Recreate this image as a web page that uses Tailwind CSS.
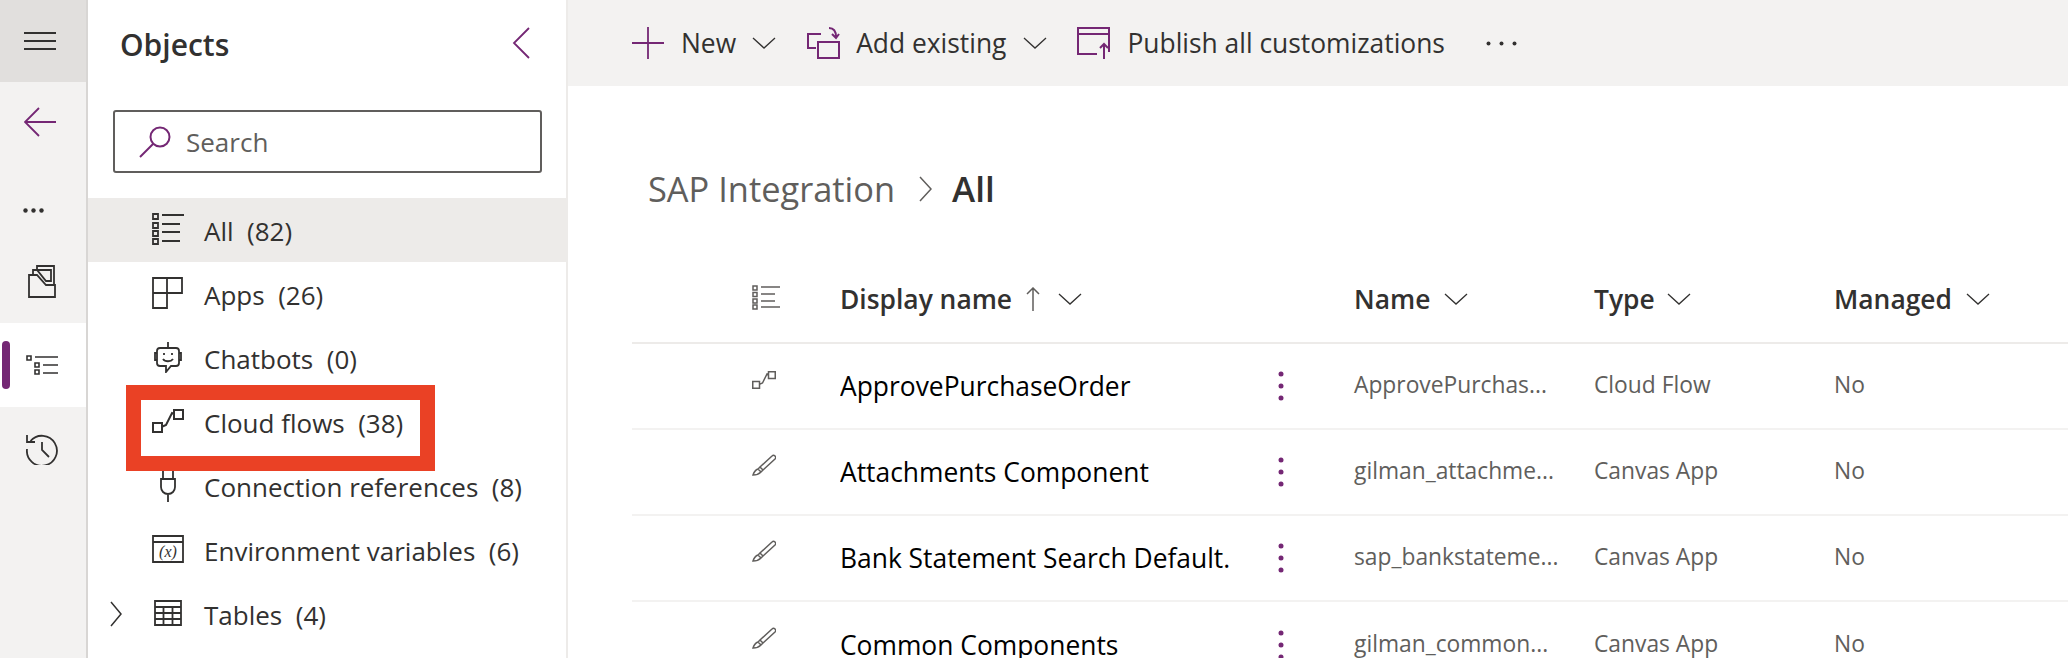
<!DOCTYPE html>
<html lang="en">
<head>
<meta charset="utf-8">
<title>SAP Integration - All</title>
<script src="https://cdn.jsdelivr.net/npm/@tailwindcss/browser@4"></script>
</head>
<body class="bg-white">
<svg class="hidden">
    <symbol id="chevron-down" viewBox="0 0 24 12"><path d="M1 1l11 10L23 1" fill="none" stroke="currentColor" stroke-width="1.300"/></symbol>
    <symbol id="flow" viewBox="0 0 32 24"><path d="M1 14h9v9H1zM22 1h9v9h-9zM10.500 17.500L14 16l6-12 2 1" fill="none" stroke="currentColor" stroke-width="2"/></symbol>
    <symbol id="brush" viewBox="0 0 24 22"><path d="M20 2a2 2 0 0 1 3 3L11 16l-3-3zM8 13l-2 2 3 3 2-2M6 15c-3 1-4 3-5 6 3 0 6-1 8-3" fill="none" stroke="currentColor" stroke-width="1.500"/></symbol>
</svg>

<div class="relative flex w-[2068px] h-[658px] overflow-hidden font-['Open_Sans',sans-serif] text-[#323130]">

    <!-- left rail -->
    <nav class="w-[88px] shrink-0 flex flex-col bg-[#f3f2f1] border-r-2 border-[#d8d6d4]">
        <div class="h-[82px] flex items-center pl-[24px] bg-[#e1dfdd]">
            <svg class="w-8 h-[18px]" viewBox="0 0 32 18"><path d="M0 1h32M0 9h32M0 17h32" stroke="#323130" stroke-width="1.800"/></svg>
        </div>
        <div class="h-[80px] flex items-center pl-[24px]">
            <svg class="w-8 h-[30px]" viewBox="0 0 32 30"><path d="M15 1L1 15l14 14M1 15h31" fill="none" stroke="#742774" stroke-width="1.800"/></svg>
        </div>
        <div class="h-[96px] flex items-center pl-[23px]">
            <svg class="w-[21px] h-[5px]" viewBox="0 0 21 5"><circle cx="2.500" cy="2.500" r="2.200" fill="#323130"/><circle cx="10.500" cy="2.500" r="2.200" fill="#323130"/><circle cx="18.500" cy="2.500" r="2.200" fill="#323130"/></svg>
        </div>
        <div class="h-[65px] pb-[18px] flex items-center pl-[28px]">
            <svg class="w-[28px] h-[33px]" viewBox="0 0 28 33"><path d="M1 32V10h8l9 10h9v12zM5 10V5h4l9 11h5V5H5M9 5V1h17v18" fill="none" stroke="#323130" stroke-width="1.800"/></svg>
        </div>
        <div class="relative h-[84px] bg-white flex items-center pl-[26px]">
            <div class="absolute left-[2px] top-[18px] w-2 h-12 rounded bg-[#742774]"></div>
            <svg class="w-8 h-5" viewBox="0 0 32 20"><path d="M1 1h4v4H1zM9 8h4v4H9zM9 15h4v4H9zM9 2h23M17 10h15M17 18h15" fill="none" stroke="#323130" stroke-width="1.600"/></svg>
        </div>
        <div class="h-[84px] flex items-center pl-[26px]">
            <svg class="w-8 h-8" viewBox="0 0 32 32"><path d="M4.500 8A15 15 0 1 1 1 16M1 2v7h8M16 9v8l7 7" fill="none" stroke="#323130" stroke-width="1.800"/></svg>
        </div>
    </nav>

    <!-- objects panel -->
    <aside class="w-[480px] shrink-0 border-r-2 border-[#edebe9] bg-white">
        <div class="h-[110px] pl-[32px] pr-[36px] pt-[25px] flex justify-between items-start">
            <h2 class="text-[30px] leading-[40px] font-semibold">Objects</h2>
            <svg class="w-[18px] h-[32px] mt-[2px]" viewBox="0 0 18 32"><path d="M17 1L2 16l15 15" fill="none" stroke="#742774" stroke-width="1.800"/></svg>
        </div>
        <div class="ml-[25px] w-[429px] h-[63px] border-2 border-[#605e5c] rounded-[3px] flex items-center pl-[24px]">
            <svg class="w-[32px] h-[32px]" viewBox="0 0 32 32"><circle cx="21" cy="11" r="9.500" fill="none" stroke="#742774" stroke-width="2"/><path d="M14 18L1 31" stroke="#742774" stroke-width="2"/></svg>
            <span class="ml-[15px] pt-[2px] text-[26px] text-[#605e5c]">Search</span>
        </div>
        <ul class="mt-[25px] text-[26px]">
            <li class="h-[64px] flex items-center pl-[22px] bg-[#edebe9]">
                <span class="w-[42px]"></span>
                <svg class="w-[32px] h-[32px] mr-[20px] -mt-[2px]" viewBox="0 0 32 32"><path d="M1 1h5v5H1zM1 10h5v5H1zM1 18h5v5H1zM1 26h5v5H1zM10 2h22M10 11h18M10 19h18M10 28h18" fill="none" stroke="#323130" stroke-width="1.800"/></svg>
                <span class="pt-[2px]">All&nbsp; (82)</span>
            </li>
            <li class="h-[64px] flex items-center pl-[22px]">
                <span class="w-[42px]"></span>
                <svg class="w-[32px] h-[32px] mr-[20px] -mt-[2px]" viewBox="0 0 32 32"><path d="M1 1h14v15H1zM15 1h15v15H15zM1 16h14v15H1z" fill="none" stroke="#323130" stroke-width="1.800"/></svg>
                <span class="pt-[2px]">Apps&nbsp; (26)</span>
            </li>
            <li class="h-[64px] flex items-center pl-[22px]">
                <span class="w-[42px]"></span>
                <svg class="w-[32px] h-[32px] mr-[20px] -mt-[2px]" viewBox="0 0 32 32"><path d="M16 1v6M8 7h16a3 3 0 0 1 3 3v12a3 3 0 0 1-3 3h-5l-5 6v-6H8a3 3 0 0 1-3-3V10a3 3 0 0 1 3-3zM5 12H3v7h2M27 12h2v7h-2M11 18c2 3 8 3 10 0M12 12v2M20 12v2" fill="none" stroke="#323130" stroke-width="1.800"/></svg>
                <span class="pt-[2px]">Chatbots&nbsp; (0)</span>
            </li>
            <li class="h-[64px] flex items-center pl-[22px]">
                <span class="w-[42px]"></span>
                <svg class="w-[32px] h-[24px] mr-[20px] -mt-[2px]"><use href="#flow"/></svg>
                <span class="pt-[2px]">Cloud flows&nbsp; (38)</span>
            </li>
            <li class="h-[64px] flex items-center pl-[22px]">
                <span class="w-[42px]"></span>
                <svg class="w-[32px] h-[32px] mr-[20px]" viewBox="0 0 32 32"><path d="M11 1v8M21 1v8M9 9h14v8c0 4-3 7-7 7s-7-3-7-7zM16 24v8" fill="none" stroke="#323130" stroke-width="1.800"/></svg>
                <span class="pt-[2px]">Connection references&nbsp; (8)</span>
            </li>
            <li class="h-[64px] flex items-center pl-[22px]">
                <span class="w-[42px]"></span>
                <svg class="w-[32px] h-[28px] mr-[20px] -mt-[2px]" viewBox="0 0 32 28"><path d="M1 1h30v26H1zM1 7h30" fill="none" stroke="#323130" stroke-width="1.800"/><text x="16" y="22" text-anchor="middle" font-family="Liberation Serif" font-style="italic" font-size="16" fill="#323130">(x)</text></svg>
                <span class="pt-[2px]">Environment variables&nbsp; (6)</span>
            </li>
            <li class="h-[64px] flex items-center pl-[22px]">
                <svg class="w-[12px] h-[26px] mr-[30px]" viewBox="0 0 12 26"><path d="M1 1l10 12L1 25" fill="none" stroke="#323130" stroke-width="1.500"/></svg>
                <svg class="w-[32px] h-[26px] mr-[20px] -mt-[2px]" viewBox="0 0 32 26"><path d="M3 1h26v24H3zM3 7h26M3 13h26M3 19h26M11.500 7v18M20.500 7v18" fill="none" stroke="#323130" stroke-width="1.800"/></svg>
                <span class="pt-[2px]">Tables&nbsp; (4)</span>
            </li>
        </ul>
    </aside>

    <!-- main -->
    <main class="flex-1 min-w-0">
        <div class="h-[86px] bg-[#f3f2f1] pl-[64px] flex items-center text-[26.400px]">
            <svg class="w-8 h-8 mr-[17px]" viewBox="0 0 32 32"><path d="M16 0v32M0 16h32" stroke="#742774" stroke-width="1.800"/></svg>
            <span class="pt-[2px]">New</span>
            <svg class="w-[24px] h-[12px] ml-[16px] mr-[31px]"><use href="#chevron-down"/></svg>
            <svg class="w-[33px] h-[32px] mr-[16px]" viewBox="0 0 33 32"><path d="M14 7H1v14h8M11 15h21v16H11zM22 1c5 0 7 3 7 9M25 7l4 4 3-4" fill="none" stroke="#742774" stroke-width="2"/></svg>
            <span class="pt-[2px]">Add existing</span>
            <svg class="w-[24px] h-[12px] ml-[17px] mr-[30px]"><use href="#chevron-down"/></svg>
            <svg class="w-[33px] h-[32px] mr-[17px]" viewBox="0 0 33 32"><path d="M20 27H1V1h31v24M1 7h31M27 32V17M23 21l4-4 4 4" fill="none" stroke="#742774" stroke-width="2"/></svg>
            <span class="pt-[2px]">Publish all customizations</span>
            <svg class="w-[31px] h-[5px] ml-[41px]" viewBox="0 0 31 5"><circle cx="2.500" cy="2.500" r="2" fill="#323130"/><circle cx="15.500" cy="2.500" r="2" fill="#323130"/><circle cx="28.500" cy="2.500" r="2" fill="#323130"/></svg>
        </div>

        <div class="h-[84px] mt-[61px] mb-[25px] pl-[80px] flex items-center">
            <span class="text-[34.400px] text-[#605e5c]">SAP Integration</span>
            <svg class="w-[13px] h-[26px] ml-[24px] mr-[20px]" viewBox="0 0 13 26"><path d="M1 1l11 12L1 25" fill="none" stroke="#605e5c" stroke-width="1.500"/></svg>
            <span class="text-[35px] font-semibold">All</span>
        </div>

        <div class="ml-[64px] overflow-hidden">
            <div class="h-[88px] flex items-center border-b-2 border-[#edebe9] text-[26.400px] font-semibold">
                <div class="w-[120px] shrink-0"></div>
                <div class="w-[88px] shrink-0">
                    <svg class="w-[28px] h-[25px] -mt-[4px]" viewBox="0 0 28 25"><path d="M1 1h4v4H1zM1 7.500h4v4H1zM1 14h4v4H1zM1 20h4v4H1zM9 2h19M9 9h14M9 16h14M9 22h19" fill="none" stroke="#605e5c" stroke-width="1.500"/></svg>
                </div>
                <div class="w-[514px] shrink-0 flex items-center">
                    <span class="pt-[2px]">Display name</span>
                    <svg class="w-[14px] h-[24px] ml-[14px]" viewBox="0 0 14 24"><path d="M7 24V1M1 7l6-6 6 6" fill="none" stroke="#605e5c" stroke-width="1.500"/></svg>
                    <svg class="w-[24px] h-[12px] ml-[18px]"><use href="#chevron-down"/></svg>
                </div>
                <div class="w-[240px] shrink-0 flex items-center">
                    <span class="pt-[2px]">Name</span>
                    <svg class="w-[24px] h-[12px] ml-[14px]"><use href="#chevron-down"/></svg>
                </div>
                <div class="w-[240px] shrink-0 flex items-center">
                    <span class="pt-[2px]">Type</span>
                    <svg class="w-[24px] h-[12px] ml-[12px]"><use href="#chevron-down"/></svg>
                </div>
                <div class="shrink-0 flex items-center">
                    <span class="pt-[2px]">Managed</span>
                    <svg class="w-[24px] h-[12px] ml-[14px]"><use href="#chevron-down"/></svg>
                </div>
            </div>

            <div class="h-[86px] flex items-center border-b-2 border-[#f3f2f1]">
                <div class="w-[120px] shrink-0"></div>
                <div class="w-[88px] shrink-0 text-[#605e5c]"><svg class="w-[24px] h-[18px] -mt-[12px]"><use href="#flow"/></svg></div>
                <div class="w-[390px] mr-[40px] pt-[2px] shrink-0 text-[26.400px] text-black whitespace-nowrap overflow-hidden">ApprovePurchaseOrder</div>
                <div class="w-[84px] shrink-0"><svg class="w-[6px] h-[30px] ml-[8px]" viewBox="0 0 6 30"><circle cx="3" cy="3" r="2.500" fill="#742774"/><circle cx="3" cy="15" r="2.500" fill="#742774"/><circle cx="3" cy="27" r="2.500" fill="#742774"/></svg></div>
                <div class="w-[240px] shrink-0 -mt-[4px] pt-[2px] text-[22.800px] text-[#605e5c] whitespace-nowrap">ApprovePurchas...</div>
                <div class="w-[240px] shrink-0 -mt-[4px] pt-[2px] text-[22.800px] text-[#605e5c]">Cloud Flow</div>
                <div class="-mt-[4px] pt-[2px] text-[22.800px] text-[#605e5c]">No</div>
            </div>
            <div class="h-[86px] flex items-center border-b-2 border-[#f3f2f1]">
                <div class="w-[120px] shrink-0"></div>
                <div class="w-[88px] shrink-0 text-[#605e5c]"><svg class="w-[24px] h-[22px] -mt-[14px]"><use href="#brush"/></svg></div>
                <div class="w-[390px] mr-[40px] pt-[2px] shrink-0 text-[26.400px] text-black whitespace-nowrap overflow-hidden">Attachments Component</div>
                <div class="w-[84px] shrink-0"><svg class="w-[6px] h-[30px] ml-[8px]" viewBox="0 0 6 30"><circle cx="3" cy="3" r="2.500" fill="#742774"/><circle cx="3" cy="15" r="2.500" fill="#742774"/><circle cx="3" cy="27" r="2.500" fill="#742774"/></svg></div>
                <div class="w-[240px] shrink-0 -mt-[4px] pt-[2px] text-[22.800px] text-[#605e5c] whitespace-nowrap">gilman_attachme...</div>
                <div class="w-[240px] shrink-0 -mt-[4px] pt-[2px] text-[22.800px] text-[#605e5c]">Canvas App</div>
                <div class="-mt-[4px] pt-[2px] text-[22.800px] text-[#605e5c]">No</div>
            </div>
            <div class="h-[86px] flex items-center border-b-2 border-[#f3f2f1]">
                <div class="w-[120px] shrink-0"></div>
                <div class="w-[88px] shrink-0 text-[#605e5c]"><svg class="w-[24px] h-[22px] -mt-[14px]"><use href="#brush"/></svg></div>
                <div class="w-[390px] mr-[40px] pt-[2px] shrink-0 text-[26.400px] text-black whitespace-nowrap overflow-hidden">Bank Statement Search Default.</div>
                <div class="w-[84px] shrink-0"><svg class="w-[6px] h-[30px] ml-[8px]" viewBox="0 0 6 30"><circle cx="3" cy="3" r="2.500" fill="#742774"/><circle cx="3" cy="15" r="2.500" fill="#742774"/><circle cx="3" cy="27" r="2.500" fill="#742774"/></svg></div>
                <div class="w-[240px] shrink-0 -mt-[4px] pt-[2px] text-[22.800px] text-[#605e5c] whitespace-nowrap">sap_bankstateme...</div>
                <div class="w-[240px] shrink-0 -mt-[4px] pt-[2px] text-[22.800px] text-[#605e5c]">Canvas App</div>
                <div class="-mt-[4px] pt-[2px] text-[22.800px] text-[#605e5c]">No</div>
            </div>
            <div class="h-[86px] flex items-center">
                <div class="w-[120px] shrink-0"></div>
                <div class="w-[88px] shrink-0 text-[#605e5c]"><svg class="w-[24px] h-[22px] -mt-[14px]"><use href="#brush"/></svg></div>
                <div class="w-[390px] mr-[40px] pt-[2px] shrink-0 text-[26.400px] text-black whitespace-nowrap overflow-hidden">Common Components</div>
                <div class="w-[84px] shrink-0"><svg class="w-[6px] h-[30px] ml-[8px]" viewBox="0 0 6 30"><circle cx="3" cy="3" r="2.500" fill="#742774"/><circle cx="3" cy="15" r="2.500" fill="#742774"/><circle cx="3" cy="27" r="2.500" fill="#742774"/></svg></div>
                <div class="w-[240px] shrink-0 -mt-[4px] pt-[2px] text-[22.800px] text-[#605e5c] whitespace-nowrap">gilman_common...</div>
                <div class="w-[240px] shrink-0 -mt-[4px] pt-[2px] text-[22.800px] text-[#605e5c]">Canvas App</div>
                <div class="-mt-[4px] pt-[2px] text-[22.800px] text-[#605e5c]">No</div>
            </div>
        </div>
    </main>

    <!-- red annotation box over the list -->
    <div class="absolute left-[126px] top-[385px] w-[309px] h-[86px] border-[15px] border-[#ea4125]"></div>
</div>
</body>
</html>
